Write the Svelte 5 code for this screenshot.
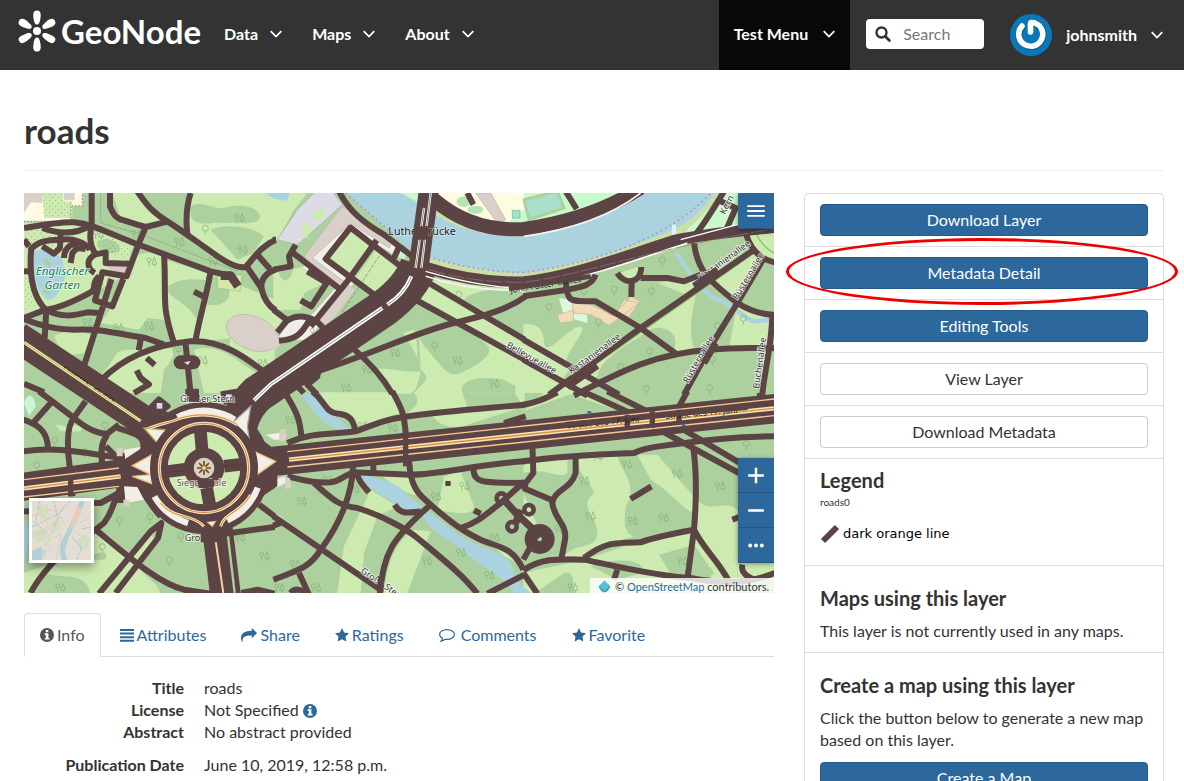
<script>
  const menus = ['Data', 'Maps', 'About'];
  const tabs = [
    { label: 'Info', icon: 'info', active: true },
    { label: 'Attributes', icon: 'bars' },
    { label: 'Share', icon: 'share' },
    { label: 'Ratings', icon: 'star' },
    { label: 'Comments', icon: 'comment' },
    { label: 'Favorite', icon: 'star' }
  ];
  const actions = [
    { label: 'Download Layer', primary: true },
    { label: 'Metadata Detail', primary: true, marked: true },
    { label: 'Editing Tools', primary: true },
    { label: 'View Layer' },
    { label: 'Download Metadata' }
  ];

  // The map is drawn as a grid of 750 x 600 tiles on a 2250 x 1200 canvas.
  const tiles = [
    {
      x: 0, y: 0,
      light: [
        'M0 90 L150 85 L200 100 L330 150 L300 250 L205 300 L70 350 L0 370Z',
        'M265 0 H345 L425 85 L365 100 L290 75Z',
        'M498 0 H752 V140 C720 150 690 190 665 215 C600 210 560 160 490 120Z',
        'M335 190 C370 170 410 180 420 200 L560 240 L515 440 H450 L420 380 L370 375 L345 410 L230 390 L290 300Z',
        'M560 240 L752 320 V552 C690 500 600 480 620 435 C580 440 520 450 515 440Z',
        'M90 430 C120 410 190 410 200 430 L180 480 L120 490Z',
        'M235 540 C280 500 260 470 320 470 L420 460 C470 440 450 500 420 530 L410 600 H240Z',
        'M510 470 C600 450 640 510 700 540 L650 600 H540Z'
      ],
      dark: [
        'M500 40 C540 15 570 60 620 40 C660 30 720 50 705 80 C680 100 620 85 570 90 C530 95 500 90 500 60Z',
        'M560 110 C600 90 690 100 720 130 L690 180 L640 200Z',
        'M430 280 C480 250 510 260 545 260 L530 400 C500 330 440 320 430 290Z',
        'M545 250 H600 L615 290 C625 330 580 340 550 335Z',
        'M220 145 C250 125 290 150 288 170 C270 190 230 180 220 160Z'
      ],
      roads: [
        'M0 105 C60 95 110 85 150 88 C200 92 240 115 330 150 L560 235 L605 245',
        'M203 0 V95 C195 130 198 160 215 183 C185 200 188 225 212 240',
        'M258 0 V40 C270 70 280 78 300 82 L340 95 L365 102 L430 86',
        'M340 -5 C370 40 390 60 430 85 C470 110 510 140 560 175 C600 205 640 228 665 222 C690 195 710 160 755 140',
        'M500 0 C490 30 485 80 490 125',
        'M55 105 C100 122 150 128 200 97',
        'M365 102 L345 150 L308 250 L235 238 L213 322 L265 340 L298 258',
        'M262 258 L240 330', 'M210 185 L245 178 L245 210 L315 212',
        'M18 172 C40 145 70 140 110 140 C150 135 185 150 198 170',
        'M110 115 L108 165 L90 182 L55 160', 'M0 140 L15 160', 'M0 235 H18',
        'M120 195 C120 165 150 140 160 165 L185 168', 'M140 210 L145 180 L165 160',
        'M22 165 C15 240 25 310 65 350 C110 345 160 320 205 295 C215 280 205 265 225 250',
        'M0 375 L65 350 C110 375 150 368 190 358 L225 360', 'M67 350 L62 435',
        'M0 378 C60 402 100 408 150 410 C230 405 290 425 365 435 L420 455',
        'M237 340 L178 525', 'M420 185 C425 260 420 300 425 350 C430 390 440 420 450 450',
        'M560 235 C545 320 525 380 515 440',
        'M228 565 C300 490 400 455 500 445 C590 440 660 490 725 540',
        'M510 296 L542 312', 'M350 440 L344 472', 'M368 495 L392 516',
        'M338 532 L350 555 L375 574 L330 600', 'M485 455 L500 605', 'M0 572 L60 598',
        'M668 220 L712 285 C720 320 735 340 755 352', 'M700 185 L738 228', 'M755 230 C722 240 710 260 712 290'
      ]
    },
    {
      x: 750, y: 0,
      light: [
        'M-2 0 H100 L60 50 L10 140 L-2 140Z', 'M-2 240 L40 235 L90 220 L150 270 L90 300 L80 350 L-2 350Z',
        'M225 110 L305 155 L225 250 L160 200Z', 'M310 165 L385 225 L305 310 L240 260Z',
        'M-2 345 L30 380 L0 430Z', 'M450 265 L752 440 V490 L430 320Z',
        'M230 460 L420 410 C440 480 420 510 440 540 C430 570 430 590 410 602 H350 C330 560 290 520 230 460Z',
        'M430 330 C560 440 620 450 680 430 L752 500 V602 H420 C440 570 480 560 440 530Z',
        'M640 250 L752 290 V320 L640 360 L560 330 L455 265Z'
      ],
      dark: [
        'M420 330 L545 390 L620 440 C690 480 600 520 560 540 C520 560 490 500 460 470 C420 430 430 380 420 330Z',
        'M570 320 C600 290 680 280 752 300 V320 L640 360Z',
        'M565 602 C550 550 640 550 690 560 L725 580 L722 602Z',
        'M10 180 L50 140 L80 170 L50 250 C30 280 10 250 10 210Z',
        'M240 470 C300 420 350 380 375 390 C385 430 440 480 436 535 C400 540 330 520 300 530Z'
      ],
      roads: [
        'M195 -5 C225 55 270 90 330 125 L415 190', 'M232 100 L155 198 L310 312', 'M225 100 L390 228',
        'M308 142 L220 265 L110 400', 'M65 155 L45 190 L50 220 L-2 230', 'M55 178 L200 290',
        'M100 235 L158 270 L112 340 L80 322', 'M-2 350 L40 382 C80 358 130 375 150 410',
        'M10 418 L45 375', 'M15 443 C60 440 80 430 108 378', 'M-4 140 H6', 'M376 160 L360 195',
        'M445 258 L752 440', 'M415 315 L752 500', 'M130 535 C300 480 420 420 540 390 C640 365 700 350 755 310',
        'M230 460 C300 520 330 560 355 602', 'M135 520 L130 550 L100 575 L130 605', 'M70 580 L90 600',
        'M580 0 L598 35'
      ]
    },
    {
      x: 1500, y: 0,
      light: [
        'M0 395 C30 390 60 400 60 450 C70 500 150 380 175 405 C180 430 100 500 140 520 L90 600 H-2 V390',
        'M285 240 L350 220 C340 260 300 270 285 240Z',
        'M90 600 L350 405 L520 290 C500 360 490 450 520 475 C380 500 300 530 220 550 L200 600Z',
        'M560 265 L690 180 L715 200 L640 325Z', 'M590 600 L640 330 L750 365 L730 470 H560Z',
        'M400 270 L470 260 L520 250 L500 310Z', 'M670 120 H752 V208 C700 190 680 160 670 120Z'
      ],
      dark: [
        'M220 550 C230 500 300 460 350 430 C390 390 440 400 455 440 L450 485 C380 500 300 530 220 550Z',
        'M555 145 C600 130 615 150 610 190 L550 230Z', 'M480 600 L560 470 H750 V600Z'
      ],
      roads: [
        'M-2 440 L285 605', 'M-2 500 L190 608', 'M75 605 L350 405 L690 170',
        'M125 265 C130 335 140 322 215 325 L350 405 L460 485',
        'M150 608 C300 530 400 480 560 470 C640 462 700 465 752 466', 'M480 605 L560 460 L640 330 L720 195',
        'M510 150 C520 230 550 260 640 330 C680 355 720 365 752 365', 'M745 360 C745 450 720 540 715 605',
        'M665 120 C680 170 710 200 752 208', 'M-2 310 L130 290 C180 280 205 275 215 245',
        'M280 240 C300 275 350 275 352 222', 'M323 265 L322 312', 'M350 255 L430 255 L480 265 L530 245',
        'M505 135 C530 110 570 45 600 -5', 'M590 25 L635 45 L607 110', 'M125 -5 L158 48'
      ]
    },
    {
      x: 0, y: 600,
      light: ['M95 95 L130 100 L175 95 L170 115 L110 115Z', 'M85 510 L210 400 L400 580 L410 602 H-2 V540Z', 'M225 602 L380 425 L395 440 L270 602Z', 'M720 350 L752 380 V360Z'],
      dark: ['M30 602 L60 540 C120 560 180 530 200 602Z', 'M200 490 C260 460 250 500 240 500 L190 500Z'],
      roads: [
        'M45 -5 L85 25 L25 92', 'M-2 80 C60 100 70 130 72 165', 'M85 25 L150 75 C125 100 130 180 140 240 L145 310',
        'M185 25 L145 80', 'M150 75 C190 110 220 122 250 122 L285 95', 'M-2 175 C100 160 180 180 290 195',
        'M250 125 C230 150 230 180 235 215', 'M245 160 L285 200', 'M-2 355 H20', 'M285 300 L230 330 L190 330',
        'M215 410 C300 480 400 570 480 590 L560 602', 'M20 600 C40 560 60 540 85 510 L240 390 C270 350 265 330 285 295',
        'M225 602 L380 415 L412 390 L402 435 L275 600', 'M620 420 L752 402', 'M705 335 L752 370',
        'M652 600 L700 590 L752 602', 'M280 105 C330 120 370 130 355 170 C350 200 320 205 290 220',
        'M300 275 C360 275 370 330 410 370'
      ]
    },
    {
      x: 750, y: 600,
      light: [
        'M120 -2 H355 L385 60 C330 70 280 100 245 105 L220 65 L170 45Z', 'M420 -2 H752 V30 L400 60 C430 40 440 20 420 0Z',
        'M470 60 L752 40 L580 95 C540 110 490 100 470 60Z', 'M325 250 H410 L440 310 L400 300 L350 270Z',
        'M290 290 L370 340 L310 370 L270 480 L260 600 H190 L210 460Z', 'M420 410 L470 415 L400 600 H330 C340 510 360 450 420 410Z',
        'M510 250 L560 235 L600 340 C600 370 540 360 490 350Z', 'M-2 355 L200 500 L195 510 L-2 375Z', 'M660 460 C700 450 730 480 752 520 L690 490Z'
      ],
      dark: ['M565 -2 H722 L740 30 L580 42Z'],
      roads: [
        'M30 -5 C65 50 80 80 82 135', 'M-2 25 L20 0', 'M40 150 C120 115 180 125 245 115 C300 95 330 80 390 72 C500 55 600 50 752 35',
        'M115 -5 C160 30 150 60 200 63 C240 70 240 100 245 115',
        'M355 -5 C385 50 388 60 393 100 L408 230 C415 290 440 310 470 335 C520 380 560 410 600 430 C660 465 710 450 748 530',
        'M40 250 C100 265 130 270 170 268 C200 265 210 245 240 238 L410 245 C500 245 600 215 752 205',
        'M237 220 C235 300 200 390 140 470 C110 520 80 530 -2 560',
        'M120 270 C180 325 200 340 250 345 C330 370 400 410 430 435 C520 510 570 550 610 602',
        'M470 335 C350 440 330 480 318 602', 'M-2 370 L320 590', 'M75 540 L105 605', 'M50 600 C65 580 90 595 90 600',
        'M250 245 C255 268 270 280 285 298', 'M362 335 C380 365 400 360 440 355',
        'M560 405 C610 390 640 360 680 330 L752 265', 'M598 225 C600 270 620 270 752 270', 'M-2 398 L20 390',
        'M640 602 L752 545', 'M690 90 L755 70', 'M298 210 V240', 'M600 352 L620 362'
      ]
    },
    {
      x: 1500, y: 600,
      light: [
        'M130 0 H180 L330 55 L300 60 L160 10Z', 'M-2 215 L130 195 V240 C100 260 60 220 -2 240Z',
        'M160 195 L280 190 C300 250 330 260 315 320 C300 360 290 420 330 430 C240 460 220 480 180 490 L120 490 C150 450 220 470 220 420 C220 370 160 340 210 300 C200 260 160 250 160 195Z',
        'M340 185 H400 L500 300 C560 380 590 310 640 350 V602 H-2 V540 L180 500 L330 450 L510 405 V360 C440 330 430 290 380 260Z',
        'M-2 300 L50 420 L0 380Z', 'M440 120 L640 225 V232 L500 160Z', 'M640 350 H752 V560 H640Z', 'M-2 55 L150 0 H60Z'
      ],
      dark: [
        'M405 485 L510 455 L570 540 L550 560 H450Z', 'M200 520 C280 490 370 500 355 540 L280 560Z', 'M30 602 L120 540 C150 530 150 570 150 602Z',
        'M305 340 C340 280 380 260 410 280 L500 360 C500 400 430 400 340 430 C300 420 300 380 305 340Z'
      ],
      roads: [
        'M-2 205 C100 190 200 185 330 180 C370 160 400 162 440 155 C560 138 660 130 752 130',
        'M155 190 V240 C140 290 90 290 85 330 C90 380 130 390 123 440 L112 498', 'M25 150 L28 240 L5 270 L0 290',
        'M-2 285 L85 322', 'M-2 532 C60 490 120 500 180 500 C280 520 400 550 500 555 C600 575 680 570 752 540',
        'M180 495 C240 450 260 450 350 448 C400 430 460 420 510 410', 'M508 165 C520 250 515 350 510 410 L490 560',
        'M510 410 C540 470 580 500 612 560', 'M320 318 L382 280', 'M20 460 L-2 500', 'M-2 540 L40 602',
        'M280 530 L270 560', 'M655 515 C650 540 670 550 690 560', 'M415 115 L645 240', 'M470 105 L645 208',
        'M175 -5 L330 65', 'M250 -5 L400 70', 'M490 -5 L460 50', 'M100 -2 C60 20 30 30 -2 35', 'M708 0 V30', 'M625 380 L645 372'
      ]
    }
  ];
  const trees = [
    [645, 75], [465, 148], [655, 170], [382, 207], [190, 390], [282, 405], [374, 400], [535, 503], [715, 512], [455, 468], [222, 125], [337, 125], [565, 205],
    [1112, 480], [1300, 503], [872, 418], [965, 585], [1028, 530], [955, 480], [1410, 572],
    [798, 682], [1105, 705], [832, 925], [990, 890], [812, 1115], [875, 1185], [1320, 880], [1235, 912], [1410, 1035], [1310, 1080], [1395, 1148], [1208, 1105], [910, 862], [1015, 700], [765, 1185], [720, 1090],
    [1808, 815], [1958, 843], [2088, 880], [1825, 985], [1918, 975], [1698, 970], [1720, 790], [1680, 864], [1974, 1105], [1645, 1185], [108, 1185], [648, 1035], [1605, 1010]
  ];
  const singles = [
    [243, 700], [92, 745], [38, 820], [287, 985], [378, 975], [436, 1105], [235, 1065], [470, 1032], [182, 780],
    [1575, 345], [1882, 297], [1877, 478], [1770, 292], [1724, 390], [1680, 298], [2065, 502], [2158, 380], [2080, 402], [1790, 525], [1867, 590], [2057, 588], [1915, 205], [2167, 755], [1305, 308], [1232, 460], [544, 110]
  ];
</script>

{#snippet chevron()}
  <svg class="chevron" viewBox="0 0 12 8" aria-hidden="true"><path d="M.7 1.2 6 6.5l5.3-5.3" fill="none" stroke="currentColor" stroke-width="1.7" /></svg>
{/snippet}

{#snippet icon(name)}
  {#if name === 'info'}
    <svg class="ico" viewBox="0 0 14 14" aria-hidden="true"><circle cx="7" cy="7" r="7" fill="currentColor" /><path d="M5.8 2h2.5v2.2H5.8zM4.7 5.2h3.7v4.7h1.1v1.7H4.7V9.9h1.1V6.9H4.7z" fill="#fff" /></svg>
  {:else if name === 'bars'}
    <svg class="ico" viewBox="0 0 14 14" aria-hidden="true"><path d="M0 1h14v2H0zM0 4.600h14v2H0zM0 8.200h14v2H0zM0 11.800h14v2H0z" fill="currentColor" /></svg>
  {:else if name === 'share'}
    <svg class="ico wide" viewBox="0 0 16 14" aria-hidden="true"><path d="M16 5 10.800 0v2.800C3.500 2.800 0 5.800 0 10c0 1.300.5 2.800 1 3.900.3.300.7.100.6-.3C1.100 9.500 3 7.400 10.800 7.400v2.800z" fill="currentColor" /></svg>
  {:else if name === 'comment'}
    <svg class="ico wide" viewBox="0 0 16 14" aria-hidden="true"><path d="M8 1.600c4.100 0 7.400 2.200 7.400 4.900S12.100 11.400 8 11.400c-.7 0-1.300 0-1.900-.2-1.100 1-2.600 1.700-4.100 1.900.7-.8 1.300-1.700 1.500-2.700C1.800 9.500.6 8.100.6 6.500c0-2.700 3.300-4.900 7.400-4.900z" fill="none" stroke="currentColor" stroke-width="1.200" /></svg>
  {:else}
    <svg class="ico" viewBox="0 0 14 14" aria-hidden="true"><path d="m7 0 2.100 4.500 4.900.7-3.500 3.400.8 4.900L7 11.200l-4.300 2.300.8-4.900L0 5.200l4.900-.7z" fill="currentColor" /></svg>
  {/if}
{/snippet}

<header>
  <a class="logo" href="#home" aria-label="GeoNode home">
    <svg viewBox="0 0 38 42" aria-hidden="true">
      <g fill="#fff">
        <circle cx="19" cy="21" r="4" />
        {#each [0, 60, 120, 180, 240, 300] as a}
          <path d="M19 14.600c-2.200 0-2.800-2.600-3.300-5.600C15 5.200 14.600.400 19 .400S23 5.200 22.300 9c-.5 3-1.100 5.600-3.300 5.600z" transform="rotate({a} 19 21)" />
        {/each}
      </g>
    </svg>
    <span>GeoNode</span>
  </a>
  <nav>
    {#each menus as m}
      <a href="#menu">{m}{@render chevron()}</a>
    {/each}
  </nav>
  <nav class="right">
    <a class="current" href="#test">Test Menu{@render chevron()}</a>
    <label class="search">
      <svg viewBox="0 0 16 16" aria-hidden="true"><circle cx="6.500" cy="6.500" r="5" fill="none" stroke="#333" stroke-width="2.400" /><path d="m10.200 10.200 4.200 4.200" stroke="#333" stroke-width="2.800" stroke-linecap="round" /></svg>
      <input type="text" placeholder="Search" aria-label="Search" />
    </label>
    <a class="user" href="#profile">
      <svg class="avatar" viewBox="0 0 42 42" aria-hidden="true">
        <circle cx="21" cy="21" r="21" fill="#0b76b8" />
        <path d="M12.300 12.500a12 12 0 1 0 12-3.500" fill="none" stroke="#075587" stroke-width="6.500" stroke-linecap="round" />
        <path d="M12 12a12 12 0 1 0 13-3C22 8 20.500 8.500 20.500 10v8" fill="none" stroke="#fff" stroke-width="5.600" stroke-linecap="round" stroke-linejoin="round" />
      </svg>
      johnsmith{@render chevron()}
    </a>
  </nav>
</header>

<main>
  <h1>roads</h1>
  <div class="columns">
    <section class="primary">
      <div class="map">
        <svg class="canvas" viewBox="0 0 2250 1200" preserveAspectRatio="xMidYMid slice" role="img" aria-label="Map of the roads layer">
          <defs>
            <pattern id="dots" width="18" height="18" patternUnits="userSpaceOnUse"><rect x="3" y="3" width="2.500" height="2.500" fill="#79a86a" /><rect x="12" y="12" width="2.500" height="2.500" fill="#79a86a" /></pattern>
            <g id="pair" fill="none" stroke="#86b07a" stroke-width="2.200"><circle cx="-7" cy="-6" r="6" /><path d="M-7 0V13M9-14 2 7H16ZM9 7v7" /></g>
            <g id="tree" fill="none" stroke="#86b07a" stroke-width="2.200"><circle cy="-4" r="9" /><path d="M0 5V16" /></g>
          </defs>
          <rect width="2250" height="1200" fill="#add19e" />
          {#each tiles as t}
            <g transform="translate({t.x} {t.y})">
              {#each t.light as d}<path {d} fill="#cdebb0" />{/each}
              {#each t.dark as d}<path {d} fill="#add19e" />{/each}
            </g>
          {/each}

          <path d="M0 0H175V38L140 40V85H0Z" fill="#fffbe2" />
          <path d="M55 0H118V25H145V75H60Z" fill="#cdebb0" /><path d="M55 0H118V25H145V75H60Z M0 110H110V180L60 150 0 160Z M220 120L330 155 310 210 250 170Z M0 250 25 260 50 340 0 350Z M230 250 275 265 258 330 225 320Z" fill="url(#dots)" />
          <path d="M0 0H55V30L20 28 0 60ZM120 0H152V22H120Z" fill="#d9d0c9" />
          <path d="M0 85H140V38H175V0" fill="none" stroke="#c07eb1" stroke-width="4" stroke-dasharray="4 6" />
          <path d="M230 0V90L340 120 640 235" fill="none" stroke="#86a97c" stroke-width="2" />
          <path d="M28 175C45 165 100 175 115 200L125 250C110 290 100 320 70 320C40 300 20 240 28 175Z" fill="#aad3df" />
          <path d="M55 205C65 185 85 200 78 222Z M60 280C70 270 85 290 75 305C60 305 55 295 60 280Z" fill="#add19e" />
          <path d="M250 200 308 218 300 245 262 235 245 215Z" fill="#d9c9c4" />
          <ellipse cx="685" cy="420" rx="82" ry="50" transform="rotate(22 685 420)" fill="#d9d0c9" stroke="#c0b0a8" stroke-width="2" />
          <path d="M580 250 655 245 648 295 580 285Z" fill="#d6e8a8" stroke="#9dbd7f" stroke-width="2" />
          <path d="M725 0H798L790 22C770 25 740 15 725 0Z" fill="#aad3df" />

          <path d="M760 140 820 50 875 -5 925 -5 955 35 850 130 820 155Z" fill="#dcdbe6" stroke="#aaa" stroke-width="2" />
          <path d="M860 75C880 45 905 40 903 60L890 85ZM830 110C840 80 860 85 865 110L845 138Z" fill="#cdebb0" />
          <path d="M850 180 955 40 1130 150 1110 185 980 105 900 195 990 270 860 440 760 440 800 375 860 370 935 285 840 225Z" fill="#f2eee8" />
          <path d="M955 40 1110 140 1095 165 980 90 865 195 960 265 945 280 840 190Z" fill="#d9d0c9" stroke="#bfb0a8" stroke-width="2" />
          <path d="M970 275 995 290 910 405 885 385Z" fill="#d9d0c9" stroke="#bfb0a8" stroke-width="2" />
          <path d="M980 118 1050 158 975 245 915 200ZM1062 172 1130 225 1055 305 993 258Z" fill="#cdebb0" />
          <path d="M985 310 1035 330 930 400 915 390Z" fill="#add19e" />
          <path d="M775 400 815 375 830 400 790 435Z" fill="#ececec" />
          <path d="M750 425C775 425 775 460 750 470Z" fill="#d9d0c9" />
          <path d="M1125 165 1150 180 1140 200 1115 190Z" fill="#c6f7d0" />
          <path d="M1075 175 950 365" stroke="#6d8a66" stroke-width="2" stroke-dasharray="12 4" />
          <path d="M1210 225C1350 270 1500 275 1650 230 1850 190 2020 130 2120 -5H1180V230Z" fill="#cbe0a8" />
          <path d="M1980 120 2110 -5 2250 -5V105L2000 150Z" fill="#c9facc" />
          <path d="M965 0H1190L1240 70C1310 110 1410 140 1520 128 1700 100 1800 40 1850 0H2070C2030 70 1960 110 1900 130 1750 190 1600 225 1500 240 1390 238 1290 215 1215 193L1180 190 1110 130Z" fill="#aad3df" />
          <path d="M965 0 1110 125M1215 193C1290 215 1390 238 1500 238 1750 205 1950 120 2060 0" fill="none" stroke="#b88bc9" stroke-width="5" stroke-dasharray="5 10" />
          <path d="M1240 0H1850L1700 75 1500 110 1350 90Z" fill="#fffbe2" />
          <path d="M1130 0H1190L1185 30ZM1430 105 1500 50V0H1850L1700 75Z" fill="#c9facc" />
          <path d="M1355 0H1400L1445 80 1420 90Z" fill="#d9d0c9" stroke="#bfb0a8" stroke-width="2" />
          <ellipse cx="1318" cy="26" rx="20" ry="16" fill="#b5e3b5" /><ellipse cx="1354" cy="50" rx="24" ry="12" fill="#b5e3b5" />
          <path d="M1500 20 1600 -5 1620 45 1515 80Z" fill="#aae0cb" stroke="#add19e" stroke-width="9" /><path d="M1465 52H1488V75H1465Z" fill="#aae0cb" stroke="#6b9" stroke-width="2" />
          <path d="M1950 95V130" stroke="#e1f1f8" stroke-width="12" />
          <path d="M1955 180C1990 230 2015 270 2060 310 2140 340 2160 380 2190 385L2250 380" fill="none" stroke="#aad3df" stroke-width="14" />
          <path d="M1605 315 1690 330 1690 390 1620 370Z" fill="#dcf9e0" /><path d="M1600 365 1648 352V385L1608 390ZM1645 330 1695 332 1770 370 1800 320 1845 330 1755 398 1700 365 1648 360ZM1800 335 1820 310 1848 325 1815 372 1775 355Z" fill="#f0dcb8" stroke="#c9b18c" stroke-width="2" />

          <path d="M0 630C10 600 30 600 35 640L15 670Z" fill="#c9f5d8" /><path d="M0 980C20 990 20 1040 0 1110Z" fill="#aad3df" />
          <path d="M830 600H890C900 650 940 670 985 715L940 710C890 690 860 650 830 600Z" fill="#aad3df" />
          <path d="M1005 840C1080 865 1110 860 1150 905 1200 950 1250 980 1310 1030 1370 1070 1440 1070 1465 1120 1470 1170 1500 1180 1520 1200H1470C1440 1150 1390 1130 1330 1085 1270 1030 1220 1020 1200 975 1190 940 1130 960 1100 920 1050 900 1020 870 1005 840Z" fill="#aad3df" />

          {#each trees as [x, y]}<use href="#pair" {x} {y} />{/each}
          {#each singles as [x, y]}<use href="#tree" {x} {y} />{/each}

          <g fill="none" stroke="#86c96f" stroke-width="5">
            <path d="M1590 600 2190 180M1990 600 2215 205M1200 270 1500 445" />
            <path d="M2195 120C2210 150 2230 170 2250 180" />
          </g>

          <g fill="none" stroke="#5b4443" stroke-width="18" stroke-linejoin="round">
            {#each tiles as t}
              {#each t.roads as d}<path {d} transform="translate({t.x} {t.y})" />{/each}
            {/each}
          </g>
          <g fill="none" stroke="#5b4443" stroke-linejoin="round">
            <path d="M-20 432 400 710" stroke-width="92" />
            <path d="M640 740C640 690 660 640 700 603L1080 345C1140 300 1170 260 1185 215" stroke-width="112" />
            <path d="M1180 250 1215 -10" stroke-width="60" />
            <path d="M1230 20C1300 80 1390 115 1500 108 1620 90 1750 50 1850 -15" stroke-width="42" />
            <path d="M1200 222C1300 255 1400 270 1500 267 1650 250 1800 190 1950 143 2060 120 2180 110 2260 102" stroke-width="34" />
            <path d="M-10 882 310 838" stroke-width="84" /><path d="M740 806 2260 646" stroke-width="88" />
            <path d="M578 990 605 1210" stroke-width="92" />
            <path d="M290 780V930M460 508H518M590 248H620L642 280" stroke-width="26" />
            <path d="M470 508H508" stroke-width="42" stroke-linecap="round" />
            <path d="M383 640 405 618 432 640 405 658Z" stroke-width="16" fill="#5b4443" /><path d="M408 650 440 675" stroke-width="16" />
            <path d="M592 598 636 590 642 625 602 632ZM487 590H522V622H487Z" stroke-width="6" fill="#5b4443" />
            <circle cx="1432" cy="915" r="14" stroke-width="14" /><circle cx="1464" cy="1001" r="14" stroke-width="14" /><circle cx="1515" cy="950" r="14" stroke-width="14" />
            <path d="M1440 920 1480 965 1550 1030M1490 950 1475 990" stroke-width="22" />
            <circle cx="1547" cy="1038" r="26" stroke-width="38" />
          </g>
          <rect x="1264" y="864" width="16" height="15" fill="#5b4443" />
          <path d="M480 508 500 504 492 516Z" fill="#dcdbe6" />

          <path d="M300 770 350 762C345 790 330 800 305 808ZM300 880 340 882 360 920 305 930Z" fill="#f2eee8" />
          <path d="M278 765H296V790H278ZM298 920H316V940H298Z" fill="#d9d0c9" />
          <path d="M725 725 785 718V740H750ZM730 865 785 850V870L755 885Z" fill="#f2eee8" /><path d="M766 710 785 708V742L766 746ZM782 850 798 856 802 885 785 888Z" fill="#d9d0c9" />
          <circle cx="540" cy="825" r="198" fill="#5b4443" />
          <path d="M700 730 760 775 760 880 700 920ZM390 740 300 800 300 860 390 910Z" fill="#5b4443" />
          <rect x="398" y="630" width="17" height="17" fill="#d9d8ea" /><rect x="606" y="604" width="17" height="17" fill="#d9d8ea" />

          <g fill="none" stroke-linejoin="round">
            <path d="M0 448 350 684" stroke="#eef0a8" stroke-width="9" /><path d="M0 448 350 684" stroke="#8d8f36" stroke-width="2" />
            <path d="M690 622 740 574 1075 345M1090 335C1130 310 1150 280 1162 250" stroke="#fff" stroke-width="12" />
            <path d="M1175 225 1200 45M1192 225 1220 0" stroke="#fff" stroke-width="7" />
            <path d="M690 622 740 574 1075 345M1090 335C1130 310 1150 280 1162 250M1175 225 1200 45M1192 225 1220 0" stroke="#8c8c80" stroke-width="3" />
            <path d="M1205 235C1300 262 1400 285 1500 285 1650 265 1800 215 1990 150M1970 140 2140 95" stroke="#fff" stroke-width="4" />
            <path d="M1205 250C1300 282 1400 295 1500 292M1500 130C1640 110 1760 70 1850 0" stroke="#f7f3f3" stroke-width="5" />
            <path d="M1215 230C1320 260 1400 268 1500 268 1680 245 1850 175 2250 107" stroke="#927d7b" stroke-width="2" stroke-dasharray="50 8" />
            <path d="M0 886 290 850M795 800 2250 646" stroke="#fce3c0" stroke-width="13" />
            <path d="M0 886 290 850M795 800 2250 646" stroke="#d5922e" stroke-width="4" />
            <path d="M0 860 285 825M0 912 285 880M790 776 2250 618M790 822 2250 668" stroke="#f3c998" stroke-width="4" />
          </g>

          <circle cx="540" cy="825" r="170" pathLength="360" fill="none" stroke="#f2eee8" stroke-width="22" stroke-dasharray="46 40 44 92 60 78" transform="rotate(20 540 825)" />
          <g fill="#f2eee8" stroke="#edbd7d" stroke-width="4">
            <path d="M360 705 432 712 400 750Z" stroke="#b4b64a" /><path d="M325 818 384 785V872L325 850 380 845Z" /><path d="M690 775 755 805 692 850 698 812Z" /><path d="M540 978 580 976 565 1000Z" /><path d="M625 690 680 640 670 700 675 735Z" stroke="#aaa" />
          </g>
          <circle cx="540" cy="825" r="150" fill="none" stroke="#5b4443" stroke-width="24" />
          <g fill="none" stroke-width="9" stroke="#fbe3c2"><circle cx="540" cy="825" r="134" /><path d="M370 708C410 690 440 690 470 675 540 655 600 670 640 695M410 930C450 980 500 960 540 1000M680 905C650 960 600 960 590 1000" /></g>
          <g fill="none" stroke-width="3" stroke="#c98a35"><circle cx="540" cy="825" r="134" /><path d="M370 708C410 690 440 690 470 675 540 655 600 670 640 695M410 930C450 980 500 960 540 1000M680 905C650 960 600 960 590 1000" /></g>
          <circle cx="540" cy="825" r="112" fill="#cdebb0" />
          <circle cx="540" cy="825" r="118" fill="none" stroke="#5b4443" stroke-width="18" />
          <path d="M528 700 534 770M548 885 558 940M425 836 490 828M600 820 665 812" stroke="#5b4443" stroke-width="38" />
          <path d="M425 838 490 834M600 820 665 814" stroke="#463332" stroke-width="2" stroke-dasharray="14 8" />
          <circle cx="540" cy="825" r="61" fill="#5b4443" /><circle cx="540" cy="825" r="31" fill="#d9d0c9" />
          <g stroke="#734a08" stroke-width="5" stroke-linecap="round">
            {#each [0, 45, 90, 135, 180, 225, 270, 315] as a}<path d="M540 817V806" transform="rotate({a} 540 825)" />{/each}
          </g>
          <path d="M572 1025 598 1200" stroke="#f6d3a8" stroke-width="6" /><path d="M612 1030 632 1200" stroke="#add19e" stroke-width="7" />
          <path d="M1690 658H1702M1974 697H1984" stroke="#2a6a9c" stroke-width="6" />
          <path d="M1810 665V710M1885 655V705M1965 650V695M1145 730V820M140 850V910" stroke="#5b4443" stroke-width="16" />

          <g class="labels">
            <g class="park"><text x="115" y="246" text-anchor="middle">Englischer</text><text x="115" y="288" text-anchor="middle">Garten</text></g>
            <text class="dark" x="1093" y="127">Lutherbrücke</text>
            <path d="M1170 100 1215 100 1212 140H1168Z" fill="#5b4443" />
            <text class="monument" x="458" y="879">Siegessäule</text>
            <path d="M520 858 570 858V882H524Z" fill="#5b4443" />
            <g class="street">
              <text transform="translate(1446 462) rotate(29)">Bellevueallee</text>
              <text transform="translate(1642 544) rotate(-36)">Kastanienallee</text>
              <text transform="translate(2031 264) rotate(-36)">Kastanienallee</text>
              <text transform="translate(1992 572) rotate(-60)">Rüsternallee</text>
              <text transform="translate(2140 322) rotate(-59)">Rüsternallee</text>
              <text transform="translate(2205 588) rotate(-82)">Buchenallee</text>
              <text transform="translate(2102 66) rotate(-62)">Kern</text>
              <text transform="translate(1008 1138) rotate(34)">Große Ster</text>
              <text transform="translate(468 627)">Großer Stern</text>
              <text transform="translate(482 1045)">Großer</text>
            </g>
            <g class="faint">
              <text transform="translate(1460 300) rotate(-9)">John-Foster-Dulles</text>
              <text transform="translate(1630 706) rotate(-5)">Straße des 17. Juni</text>
              <text transform="translate(1925 678) rotate(-5)">Straße des 17. Juni</text>
              <text transform="translate(120 525) rotate(34)">Altonaer Straße</text>
            </g>
            <g fill="none" stroke="#5b4443">
              <path d="M1630 582 1720 518M2010 280 2080 230M2075 450 2040 510" stroke-width="20" />
              <path d="M1622 694 1780 680M1915 666 2170 644M125 512 340 657M1455 288 1700 250" stroke-width="14" />
              <path d="M530 1034H590M495 612H525" stroke-width="28" /><path d="M1068 1200 1072 1150" stroke-width="18" />
            </g>
          </g>
        </svg>
        <button class="map-btn menu" aria-label="Map menu"><svg viewBox="0 0 36 36"><path d="M9 13.500H27M9 18.500H27M9 23.500H27" stroke="#fff" stroke-width="2" /></svg></button>
        <div class="map-tools">
          <button class="map-btn" aria-label="Zoom in"><svg viewBox="0 0 36 36"><path d="M10 18H26M18 10V26" stroke="#fff" stroke-width="2.600" /></svg></button>
          <button class="map-btn" aria-label="Zoom out"><svg viewBox="0 0 36 36"><path d="M10 18H26" stroke="#fff" stroke-width="2.600" /></svg></button>
          <button class="map-btn" aria-label="More tools"><svg viewBox="0 0 36 36" fill="#fff"><circle cx="12" cy="18" r="2" /><circle cx="18" cy="18" r="2" /><circle cx="24" cy="18" r="2" /></svg></button>
        </div>
        <button class="basemap" aria-label="Change background">
          <svg viewBox="0 0 59 59" aria-hidden="true">
            <rect width="59" height="59" fill="#e2ded5" />
            <path d="M30 59C27 49 27 42 33 34L42 15 48 0H53L45 20 36 38 33 49 35 59ZM0 50 8 46 14 50 10 59H0Z" fill="#b2ced6" />
            <path d="M45 5 50 8 42 25 37 30Z" fill="#eecab9" />
            <path d="M4 6 15 4 18 15 9 20ZM0 30 12 27 15 37 5 42ZM45 38 55 34 57 46 48 50ZM20 20 28 18 27 29 19 31Z" fill="#d0dfc2" />
            <g fill="none" stroke-dasharray="3 1"><path d="M0 15 20 8 32 20M4 0 16 24 9 38 20 50M0 35 18 28 32 6M48 22 59 15M42 30 59 40M16 40 29 33 24 59" stroke="#e8c3bb" /><path d="M8 0 3 22 17 34M22 0 26 18 14 44M40 36 50 47 44 59M0 26 25 14 38 0M50 28 59 26" stroke="#aebfd2" /><path d="M0 6 36 26M2 44 25 40M10 56 22 26M52 0 59 12M50 59 54 25M0 20 30 30M12 0 10 59M38 50 59 54" stroke="#ebdfb8" /></g>
          </svg>
        </button>
        <p class="credit">
          <svg viewBox="0 0 14 14" aria-hidden="true"><path d="M7 1 13.500 7.500 10 12 7 13.500 4 12 .500 7.500Z" fill="#3f9eb5" /><path d="M7 .500 13 6.500 7 12 1 6.500Z" fill="#52c3d2" /></svg>
          <span>© <a href="#osm">OpenStreetMap</a> contributors.</span>
        </p>
      </div>

      <div class="tabs" role="tablist">
        {#each tabs as t}
          <a class="tab" class:active={t.active} class:spaced={t.icon === 'comment'} role="tab" aria-selected={!!t.active} href="#tab">{@render icon(t.icon)}{t.label}</a>
        {/each}
      </div>

      <dl>
        <dt>Title</dt><dd>roads</dd>
        <dt>License</dt><dd>Not Specified <a class="hint" href="#license" aria-label="License information">{@render icon('info')}</a></dd>
        <dt>Abstract</dt><dd>No abstract provided</dd>
      </dl>
      <dl>
        <dt>Publication Date</dt><dd>June 10, 2019, 12:58 p.m.</dd>
      </dl>
    </section>

    <aside>
      {#each actions as a}
        <div class="item">
          <button class="btn" class:filled={a.primary}>{a.label}</button>
          {#if a.marked}<span class="mark"></span>{/if}
        </div>
      {/each}
      <div class="item legend">
        <h4>Legend</h4>
        <p class="tiny">roads0</p>
        <div class="symbol">
          <svg viewBox="0 0 20 20" aria-hidden="true"><path d="M3 17 17 3" stroke="#5b4443" stroke-width="6" /></svg>
          <span>dark orange line</span>
        </div>
      </div>
      <div class="item text">
        <h4>Maps using this layer</h4>
        <p>This layer is not currently used in any maps.</p>
      </div>
      <div class="item text">
        <h4>Create a map using this layer</h4>
        <p>Click the button below to generate a new map based on this layer.</p>
        <button class="btn filled after">Create a Map</button>
      </div>
    </aside>
  </div>
</main>

<style>
  :global(body) { margin: 0; background: #fff; }
  :global(#app) { font: 16px/22px Lato, "Liberation Sans", sans-serif; color: #333; }
  * { box-sizing: border-box; }
  a { color: #2c689c; text-decoration: none; }
  button, input { font: inherit; }
  header { display: flex; height: 70px; padding: 0 6px 0 18px; background: #333; }
  header a { color: #fff; }
  header nav { display: flex; }
  header nav > a { display: flex; align-items: center; gap: 12px; padding: 0 15px 2px; font-weight: 700; }
  .logo { display: flex; align-items: center; gap: 5px; margin-right: 8px; padding-bottom: 8px; }
  .logo svg { width: 38px; height: 42px; }
  .logo span { font-size: 33px; line-height: 40px; font-weight: 700; }
  .chevron { width: 12px; height: 8px; }
  header nav.right { margin-left: auto; }
  header nav .current { gap: 15px; background: #080808; }
  .search { display: flex; align-items: center; gap: 12px; width: 118px; height: 30px; margin: 19px 11px 0 16px; padding: 0 9px; border-radius: 4px; background: #fff; }
  .search svg { flex: none; width: 16px; height: 16px; }
  .search input { width: 100%; min-width: 0; padding: 0; border: 0; outline: 0; background: none; color: #333; }
  .search input::placeholder { color: #777; opacity: 1; }
  header nav .user { gap: 14px; padding-top: 2px; }
  .avatar { width: 42px; height: 42px; }
  main { padding: 0 20px 24px 24px; }
  h1 { margin: 0 0 22px; padding: 41px 0 21px; border-bottom: 1px solid #eee; font-size: 35px; line-height: 38px; font-weight: 700; }
  .columns { display: grid; grid-template-columns: minmax(0, 25fr) minmax(0, 12fr); gap: 30px; align-items: start; }
  .map { position: relative; height: 400px; overflow: hidden; }
  .canvas { display: block; width: 100%; height: 100%; }
  .labels text { font-family: "Noto Sans", sans-serif; font-size: 27px; fill: #333; stroke: #fff; stroke-width: 5px; stroke-opacity: .75; paint-order: stroke; }
  .labels .park text { font-size: 35px; font-style: italic; fill: #12824f; }
  .labels .dark { font-size: 32px; fill: #222; stroke-opacity: .4; }
  .labels .monument { font-size: 27px; fill: #734a38; }
  .labels .faint text { font-size: 25px; fill: #222; stroke: none; }
  .map-btn { display: block; width: 36px; height: 35px; padding: 0; border: 0; border-bottom: 1px solid #24567f; background: #2c689c; }
  .map-btn svg { display: block; width: 36px; height: 35px; }
  .menu { position: absolute; top: 0; right: 0; height: 36px; box-shadow: 0 2px 5px #0006; }
  .map-tools { position: absolute; right: 0; bottom: 30px; box-shadow: 0 1px 5px #0006; }
  .basemap { position: absolute; left: 5px; bottom: 30px; width: 65px; height: 65px; padding: 0; border: 3px solid #fff; background: #fff; box-shadow: 0 4px 10px #0006; }
  .basemap svg { display: block; width: 59px; height: 59px; }
  .credit { position: absolute; right: 0; bottom: 0; display: flex; align-items: center; gap: 4px; margin: 0; padding: 2px 5px 0 8px; background: #ffffffcc; font-size: 11px; line-height: 13px; }
  .credit svg { width: 13px; height: 13px; }
  .tabs { display: flex; gap: 3px; margin: 20px 0; border-bottom: 1px solid #ddd; }
  .tab { display: flex; align-items: center; gap: 3px; margin-bottom: -1px; padding: 10px 15px; border: 1px solid transparent; border-radius: 4px 4px 0 0; }
  .tab.active { border-color: #ddd #ddd #fff; background: #fff; color: #555; }
  .tab.spaced { gap: 6px; }
  .ico { flex: none; width: 14px; height: 14px; }
  .ico.wide { width: 16px; }
  dl { display: grid; grid-template-columns: 160px 1fr; column-gap: 20px; margin: 0 0 11px; }
  dt { text-align: right; font-weight: 700; }
  dd { margin: 0; }
  .hint { display: inline-block; vertical-align: -2px; }
  .hint .ico { display: block; }
  aside { border: 1px solid #ddd; border-radius: 4px; }
  .item { position: relative; padding: 10px 15px; }
  .item + .item { border-top: 1px solid #ddd; }
  .btn { display: block; width: 100%; height: 32px; padding: 0 12px; border: 1px solid #ccc; border-radius: 4px; background: #fff; color: #333; line-height: 22px; }
  .btn.filled { border-color: #265a87; background: #2c689c; color: #fff; }
  .mark { position: absolute; z-index: 1; inset: -9px -15px -6px -19px; border: 3px solid #ee0000; border-radius: 50%; pointer-events: none; }
  h4 { margin: 0; font-size: 20px; line-height: 22px; font-weight: 700; }
  .item p { margin: 0; }
  .text h4 { margin: 11px 0; }
  .item .tiny { font-size: 10px; }
  .after { margin-top: 11px; }
  .symbol { display: flex; align-items: center; gap: 3px; height: 42px; color: #000; font: 13px/20px "DejaVu Sans", sans-serif; }
  .symbol svg { width: 20px; height: 20px; }
</style>
